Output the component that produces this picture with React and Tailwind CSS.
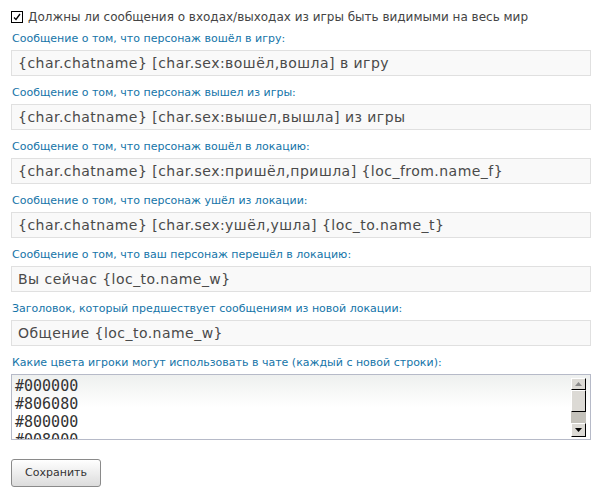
const FIELDS = [
  ["Сообщение о том, что персонаж вошёл в игру:", "{char.chatname} [char.sex:вошёл,вошла] в игру"],
  ["Сообщение о том, что персонаж вышел из игры:", "{char.chatname} [char.sex:вышел,вышла] из игры"],
  ["Сообщение о том, что персонаж вошёл в локацию:", "{char.chatname} [char.sex:пришёл,пришла] {loc_from.name_f}"],
  ["Сообщение о том, что персонаж ушёл из локации:", "{char.chatname} [char.sex:ушёл,ушла] {loc_to.name_t}"],
  ["Сообщение о том, что ваш персонаж перешёл в локацию:", "Вы сейчас {loc_to.name_w}"],
  ["Заголовок, который предшествует сообщениям из новой локации:", "Общение {loc_to.name_w}"],
];

const COLORS = ["#000000", "#806080", "#800000", "#008000"];

const sans = { fontFamily: '"DejaVu Sans", Verdana, sans-serif' };

// old-style raised scrollbar button
const ScrollBtn = ({ down, h }) => (
  <div className={`${h} flex items-center justify-center bg-[#dcdad5] border border-t-white border-l-white border-r-black border-b-black`}>
    <svg width="7" height="4" viewBox="0 0 7 4">
      {down ? <path d="M0 0h7L3.5 4z" fill="#000" /> : <path d="M0 4h7L3.5 0z" fill="#8a8a8a" />}
    </svg>
  </div>
);

export default function App() {
  return (
    <div className="w-[604px] h-[497px] bg-white pl-[11px] pt-[9px]" style={sans}>
      <div className="w-[580px]">
        <label className="flex items-center h-[16px] text-[12px] leading-[16px] text-[#444]">
          <span className="w-[12px] h-[12px] border border-black bg-white flex items-center justify-center mr-[5px]">
            <svg width="8" height="8" viewBox="0 0 8 8">
              <path d="M1 4.5l2 2L7 1" fill="none" stroke="#000" strokeWidth="1.3" />
            </svg>
          </span>
          Должны ли сообщения о входах/выходах из игры быть видимыми на весь мир
        </label>

        {FIELDS.map(([label, value], i) => (
          <div key={i}>
            <div className={`${i === 0 ? "mt-[6px]" : "mt-[9px]"} mb-[3px] h-[16px] text-[11px] leading-[16px] text-[#1474a8] pl-px`}>
              {label}
            </div>
            <div className="h-[26px] border border-[#e0e0e0] bg-[#f9f9f9] px-[6px] text-[14px] leading-[24px] tracking-[0.47px] text-[#4a4a4a] whitespace-nowrap">
              {value}
            </div>
          </div>
        ))}

        <div className="mt-[9px] mb-[3px] h-[16px] text-[11px] leading-[16px] text-[#1474a8] pl-px">
          Какие цвета игроки могут использовать в чате (каждый с новой строки):
        </div>
        <div className="h-[66px] border border-[#b6bac8] flex bg-gradient-to-b from-[#eef0ef] via-white to-white">
          <div className="flex-1 overflow-hidden pl-[3px] pt-[2px] text-[15px] leading-[18px] text-[#333]" style={{ fontFamily: '"DejaVu Sans Mono", monospace' }}>
            {COLORS.map((c) => (
              <div key={c}>{c}</div>
            ))}
          </div>
          <div className="w-[15px] mt-[3px] mb-[2px] mr-[4px] flex flex-col">
            <ScrollBtn h="h-[12px]" />
            <div className="h-[22px] bg-[#dcdad5] border border-t-white border-l-white border-r-black border-b-black" />
            <div className="flex-1 bg-[#c4c2bb]" />
            <ScrollBtn down h="h-[14px]" />
          </div>
        </div>

        <button className="mt-[19px] w-[90px] h-[28px] border border-[#8a8a8a] rounded-[3px] bg-gradient-to-b from-white to-[#dcdcdc] text-[11px] text-[#333]" style={sans}>
          Сохранить
        </button>
      </div>
    </div>
  );
}
